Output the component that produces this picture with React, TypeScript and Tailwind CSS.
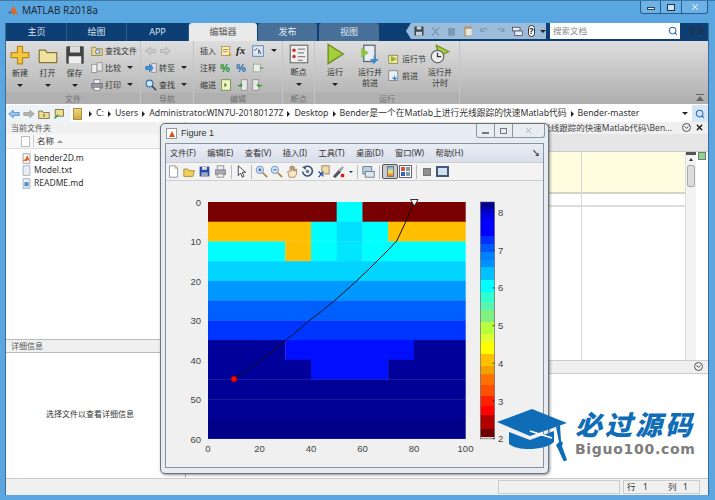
import type { ReactNode } from "react"
import { Search, X, ChevronDown } from "lucide-react"

const DARK = "#00009a"
const BLUE = "#0010ff"
const RED = "#780000"
const AMB = "#ffbf00"
const CY = "#00ffff"

// heatmap rows: [colour, columns] pairs, columns are 10 units wide
const rows: [string, number][][] = [
  [[RED, 5], [CY, 1], [RED, 4]],
  [[AMB, 4], [CY, 1], ["#00dfff", 1], [CY, 1], [AMB, 3]],
  [[CY, 3], [AMB, 1], [CY, 1], ["#00e6ff", 1], [CY, 4]],
  [["#00d4ff", 10]],
  [["#0098ff", 10]],
  [["#0060ff", 10]],
  [["#0034ff", 10]],
  [[DARK, 3], [BLUE, 5], [DARK, 2]],
  [[DARK, 4], [BLUE, 3], [DARK, 3]],
  [["#000094", 10]],
  [["#000094", 10]],
  [["#000088", 10]],
]

// colour bar bands, top to bottom: [colour, height]
const barBands: [string, number][] = [
  ["#000090", 6], ["#0000b8", 4], ["#0000e0", 7], ["#0000ff", 17], ["#0030ff", 8], ["#0058ff", 8], ["#0080ff", 8],
  ["#0090ff", 7], ["#00c0ff", 13], ["#00ffff", 12], ["#30ffd0", 10], ["#58f5b0", 8], ["#80f080", 12], ["#b8ff40", 12],
  ["#e0ff30", 8], ["#ffff00", 12], ["#ffc000", 12], ["#f0a000", 8], ["#ff7000", 11], ["#ff5000", 11], ["#ff2000", 10],
  ["#ff0000", 9], ["#b00000", 14], ["#700000", 7.8],
]

function Icon({ children, size = 14, view = 16 }: { children: ReactNode; size?: number; view?: number }) {
  return (
    <svg width={size} height={size} viewBox={`0 0 ${view} ${view}`} className="shrink-0">
      {children}
    </svg>
  )
}

function Caret({ className = "" }: { className?: string }) {
  return <span className={`inline-block w-0 h-0 border-x-[3px] border-x-transparent border-t-[3px] border-t-[#222] ${className}`} />
}

function BigBtn({ icon, lines, caret = true, width }: { icon: ReactNode; lines: string[]; caret?: boolean; width: string }) {
  return (
    <div className={`flex flex-col items-center ${width}`}>
      <div className="h-[25px] flex items-center justify-center">{icon}</div>
      <div className="text-center leading-[11px] text-[8px] text-[#333]">
        {lines.map((l) => (
          <div key={l}>{l}</div>
        ))}
      </div>
      {caret && <Caret className="mt-[6px]" />}
    </div>
  )
}

function SmallBtn({ icon, label, caret }: { icon: ReactNode; label: string; caret?: boolean }) {
  return (
    <div className="flex items-center h-[17px] gap-[2px]">
      {icon}
      <span className="text-[8px] text-[#333] whitespace-nowrap">{label}</span>
      {caret && <Caret className="ml-[4px]" />}
    </div>
  )
}

function Section({ label, width, children }: { label: string; width: string; children: ReactNode }) {
  return (
    <div className={`${width} shrink-0 flex flex-col border-r border-[#c4c4c4]`}>
      <div className="h-[52px] flex overflow-hidden">{children}</div>
      <div className="h-[11px] bg-[#b0b0b0] text-center text-[8px] leading-[11px] text-[#707070]">{label}</div>
    </div>
  )
}

function Slot({ children, width = "w-[15.5px]" }: { children: ReactNode; width?: string }) {
  return <div className={`${width} shrink-0 flex justify-center items-center`}>{children}</div>
}

function Sep({ width }: { width: string }) {
  return (
    <div className={`${width} shrink-0 flex justify-center`}>
      <span className="w-px h-[14px] bg-[#bbb]" />
    </div>
  )
}

const tabs = [
  { label: "主页", w: "w-[60px]" },
  { label: "绘图", w: "w-[60px]" },
  { label: "APP", w: "w-[62px]" },
]

function Heatmap() {
  return (
    <svg width="370" height="272" viewBox="0 0 370 272" className="block">
      {rows.map((r, ri) => {
        let col = 0
        return r.map(([c, n]) => {
          const x = 35 + col * 25.74
          col += n
          return <rect key={`${ri}-${col}`} x={x} y={18 + ri * 19.72} width={n * 25.74 + 0.3} height={20} fill={c} />
        })
      })}
      <path
        d="M241 19 Q233 38 223.7 57 C200 82 165 116 137 136 C115 155 88 177 61 195"
        fill="none"
        stroke="#111"
        strokeWidth="1"
      />
      <circle cx="61" cy="195" r="3" fill="#f00" stroke="#800" strokeWidth="0.7" />
      <path d="M237.5 15.5h7.5l-3.7 6.5z" fill="#fff" stroke="#333" strokeWidth="1" />
      {[0, 10, 20, 30, 40, 50, 60].map((v, i) => (
        <text key={v} x="28" y={22 + i * 39.45} textAnchor="end" fontSize="9.5" fill="#444" fontFamily="Liberation Sans">
          {v}
        </text>
      ))}
      {[0, 20, 40, 60, 80, 100].map((v, i) => (
        <text key={v} x={35 + i * 51.5} y="268" textAnchor="middle" fontSize="9.5" fill="#444" fontFamily="Liberation Sans">
          {v}
        </text>
      ))}
      {barBands.reduce<{ y: number; els: ReactNode[] }>(
        (acc, [c, h], i) => {
          acc.els.push(<rect key={i} x="307.5" y={acc.y} width="14" height={h + 0.3} fill={c} />)
          acc.y += h
          return acc
        },
        { y: 18, els: [] }
      ).els}
      <rect x="307.5" y="18" width="14" height="236.8" fill="none" stroke="#555" strokeWidth="0.6" />
      {[8, 7, 6, 5, 4, 3, 2].map((v, i) => (
        <g key={v}>
          <path d={`M319.5 ${28.5 + i * 37.7}h2`} stroke="#222" strokeWidth="0.8" />
          <text x="325" y={32 + i * 37.7} fontSize="9.5" fill="#444" fontFamily="Liberation Sans">
            {v}
          </text>
        </g>
      ))}
    </svg>
  )
}

function FigureWindow() {
  return (
    <div className="absolute left-[160px] top-[122px] w-[389px] h-[351px] rounded-[5px] border border-[#6b7478] bg-[#e6ecf1] shadow-[1px_1px_3px_rgba(0,0,0,0.45)] px-[4px] pb-[5px] flex flex-col">
      <div className="h-[19px] shrink-0 flex items-center gap-[4px] pl-[1px]">
        <div className="w-[11px] h-[11px] bg-white border border-[#999] flex items-center justify-center">
          <span className="block w-0 h-0 border-x-[3px] border-x-transparent border-b-[6px] border-b-[#d9551c]" />
        </div>
        <span className="text-[9px] text-[#333] font-['Liberation_Sans',sans-serif]">Figure 1</span>
        <div className="ml-auto -mt-[5px] -mr-[1px] flex h-[14px] rounded-b-[3px] border border-t-0 border-[#8a96a0] bg-[#e8edf1]">
          <div className="w-[18px] flex items-end justify-center pb-[3px] border-r border-[#8a96a0]">
            <span className="block w-[7px] h-[2px] border border-[#777]" />
          </div>
          <div className="w-[18px] flex items-center justify-center border-r border-[#8a96a0]">
            <span className="block w-[7px] h-[6px] border border-[#777]" />
          </div>
          <div className="w-[31px] flex items-center justify-center">
            <X size={9} strokeWidth={2} color="#999" />
          </div>
        </div>
      </div>
      <div className="flex-1 border border-[#87939e] bg-[#f0f0f0] flex flex-col min-h-0">
        <div className="h-[18px] shrink-0 bg-gradient-to-b from-[#e9edf5] to-[#d8deea] flex items-center pl-[4px] gap-[11.5px] text-[8.25px] text-[#333] relative">
          {["文件(F)", "编辑(E)", "查看(V)", "插入(I)", "工具(T)", "桌面(D)", "窗口(W)", "帮助(H)"].map((m) => (
            <span key={m} className="whitespace-nowrap">{m}</span>
          ))}
          <span className="absolute right-[3px] top-[3px] text-[8px] text-[#222] font-bold">↘</span>
        </div>
        <div className="h-[19px] shrink-0 border-y border-[#cfcfcf] bg-[#f3f3f3] flex items-center">
          <Slot><Icon size={13}><path d="M3 1h7l3 3v11H3z" fill="#fff" stroke="#7b8aa0" /><path d="M10 1v3h3z" fill="#f5dc80" stroke="#a08a3a" strokeWidth="0.6" /></Icon></Slot>
          <Slot><Icon size={13}><path d="M1 5h5l1 2h7l-2 7H1z" fill="#f0d060" stroke="#a08020" /></Icon></Slot>
          <Slot><Icon size={13}><rect x="2" y="2" width="12" height="12" fill="#2b4aa8" /><rect x="5" y="2" width="6" height="4" fill="#ddd" /><rect x="4" y="9" width="8" height="5" fill="#9ab" /></Icon></Slot>
          <Slot><Icon size={13}><rect x="4" y="1" width="8" height="6" fill="#eee" stroke="#888" /><rect x="2" y="6" width="12" height="6" fill="#aab" stroke="#778" /><rect x="4" y="11" width="8" height="4" fill="#eee" stroke="#888" /></Icon></Slot>
          <Sep width="w-[6px]" />
          <Slot><Icon size={13}><path d="M4 1v12l3-3 2 5 2-1-2-5h4z" fill="#fff" stroke="#222" /></Icon></Slot>
          <Sep width="w-[4px]" />
          <Slot><Icon size={13}><circle cx="6" cy="6" r="4.5" fill="#cfe6fa" stroke="#5a86b8" /><path d="M9.5 9.5L15 15" stroke="#b08030" strokeWidth="2" /><path d="M4 6h4M6 4v4" stroke="#337" /></Icon></Slot>
          <Slot><Icon size={13}><circle cx="6" cy="6" r="4.5" fill="#cfe6fa" stroke="#5a86b8" /><path d="M9.5 9.5L15 15" stroke="#b08030" strokeWidth="2" /><path d="M4 6h4" stroke="#337" /></Icon></Slot>
          <Slot><Icon size={13}><path d="M4 15L2 8l1-1 2 2V2h1l1 5V1h1l1 6V2h1l1 6 1-3h1v6l-2 4z" fill="#fde8c8" stroke="#8a6a40" strokeWidth="0.8" /></Icon></Slot>
          <Slot><Icon size={13}><path d="M4 3a6 6 0 1 1-2 5" fill="none" stroke="#335577" strokeWidth="2" /><path d="M1 2h5v4z" fill="#335577" /><circle cx="8" cy="8" r="2.2" fill="#778" /></Icon></Slot>
          <Slot><Icon size={13}><rect x="6" y="1" width="9" height="10" fill="#f3dca0" stroke="#876" /><path d="M2 15l6-7M2 8l6 6" stroke="#1738a8" strokeWidth="1.4" /></Icon></Slot>
          <Slot><Icon size={13}><path d="M1 14l7-8 3 3-7 7z" fill="#556" /><path d="M8 6l5-4 1 1-4 6" fill="#aaa" stroke="#666" strokeWidth="0.5" /><rect x="11" y="11" width="4" height="4" fill="#e11" /></Icon></Slot>
          <Slot width="w-[8px]"><span className="block w-0 h-0 border-x-[2px] border-x-transparent border-t-[2px] border-t-[#333]" /></Slot>
          <Sep width="w-[6px]" />
          <Slot><Icon size={13}><rect x="1" y="2" width="11" height="9" fill="#bcd0e4" stroke="#5a7288" /><rect x="4" y="8" width="11" height="7" fill="#dfe6ec" stroke="#5a7288" /></Icon></Slot>
          <Sep width="w-[6px]" />
          <Slot width="w-[16px]">
            <div className="w-[16px] h-[15px] rounded-[2px] border border-[#555] bg-[#c8ccd2] flex items-center justify-center">
              <div className="w-[7px] h-[11px] border border-[#777] bg-gradient-to-b from-[#6ab0f0] via-[#f8e060] to-[#e08030]" />
            </div>
          </Slot>
          <Slot>
            <div className="w-[13px] h-[13px] border border-[#667] bg-white grid grid-cols-2 gap-[1px] p-[1px]">
              <span className="bg-[#e05030]" /><span className="bg-[#8899aa]" /><span className="bg-[#3060c0]" /><span className="bg-[#8899aa]" />
            </div>
          </Slot>
          <Sep width="w-[5px]" />
          <Slot width="w-[16px]"><span className="w-[8px] h-[8px] bg-[#909090] border border-[#777]" /></Slot>
          <Slot><div className="w-[13px] h-[11px] border-2 border-[#445a74] bg-[#cfe0ef]" /></Slot>
        </div>
        <div className="flex-1 min-h-0 overflow-hidden">
          <div className="ml-[7px] mt-[3px]">
            <Heatmap />
          </div>
        </div>
      </div>
    </div>
  )
}

function Watermark() {
  return (
    <div className="absolute left-[497px] top-[408px] flex items-start">
      <svg width="72" height="52" viewBox="0 0 72 52">
        <path d="M0 13L35 0l35 14-37 13z" fill="#0f6cb6" />
        <path d="M12 23l21 8 24-9v11c-8 8-35 10-45 2z" fill="#0f6cb6" />
        <path d="M33 22l22 7" stroke="#fff" strokeWidth="1.5" />
        <path d="M59 18l4-2 1 16 2 2-1 3 5 14-3 2-6-13-2-4 3-3z" fill="#0f6cb6" />
      </svg>
      <div className="ml-[6px] flex flex-col">
        <span className="text-[27px] leading-[30px] italic font-black tracking-[3px] text-[#0f6cb6] font-['Noto_Sans_CJK_SC',sans-serif] whitespace-nowrap">必过源码</span>
        <span className="mt-[3px] text-[14px] leading-[14px] font-bold tracking-[0.7px] text-[#7d7d7d] font-['DejaVu_Sans',sans-serif] whitespace-nowrap">Biguo100.com</span>
      </div>
    </div>
  )
}

export default function App() {
  return (
    <div className="relative w-[715px] h-[500px] overflow-hidden bg-[#5aa6e0] border-t border-[#3d7aa8] font-['Noto_Sans','Noto_Sans_CJK_SC',sans-serif] flex flex-col pl-[5px] pr-[6px] pb-[5px]">
      {/* title bar */}
      <div className="h-[22px] shrink-0 flex items-start relative">
        <div className="flex items-center gap-[3px] pt-[2px] pl-[2px]">
          <svg width="12" height="12" viewBox="0 0 16 16"><path d="M1 10l4-2 4-7 6 13-3-3-3 3-3-5z" fill="#e0661c" /><path d="M1 10l4-2 2 2-3 2z" fill="#3a70a8" /></svg>
          <span className="text-[10px] text-[#1c2a38]">MATLAB R2018a</span>
        </div>
        <div className="ml-auto mr-[1px] flex h-[13px] rounded-b-[3px] border border-t-0 border-[#2a5c88] bg-[#6db2e6]">
          <div className="w-[20px] flex items-end justify-center pb-[3px] border-r border-[#2a5c88]"><span className="block w-[8px] h-[3px] bg-[#eef] border border-[#345]" /></div>
          <div className="w-[21px] flex items-center justify-center border-r border-[#2a5c88]"><span className="block w-[8px] h-[7px] border border-[#234] bg-[#cfe3f4]" /></div>
          <div className="w-[25px] flex items-center justify-center"><X size={10} strokeWidth={2.5} color="#e8f0f8" /></div>
        </div>
      </div>

      <div className="flex-1 min-h-0 flex flex-col border-l border-[#3d6d96] border-r bg-[#f0f0f0]">
        {/* tab strip */}
        <div className="h-[18px] shrink-0 bg-[#0d3e74] flex items-end relative text-[9px]">
          <div className="w-px" />
          {tabs.map((t) => (
            <div key={t.label} className={`${t.w} h-[18px] flex items-center justify-center text-[#d8e2ee] border-r border-[#2a5a8c]`}>{t.label}</div>
          ))}
          <div className="w-[68px] h-[18px] rounded-t-[3px] bg-[#e9e9e9] flex items-center justify-center text-[#555]">编辑器</div>
          <div className="w-[60px] h-[18px] ml-[1px] rounded-t-[3px] bg-[#476f98] flex items-center justify-center text-[#e0e8f2] border-r border-[#0d3e74]">发布</div>
          <div className="w-[60px] h-[18px] ml-[1px] rounded-t-[3px] bg-[#476f98] flex items-center justify-center text-[#e0e8f2]">视图</div>
          <div className="absolute left-[400px] top-[0px] w-[140px] h-[16px] bg-[#9cbcdb] [clip-path:polygon(5px_0,100%_0,100%_100%,5px_100%,0_50%)] flex items-center pl-[7px] gap-[5px]">
            <Icon size={12}><rect x="2" y="2" width="12" height="12" fill="#3b4752" /><rect x="5" y="2" width="6" height="4" fill="#c8d0d8" /><rect x="4" y="9" width="8" height="5" fill="#c8d0d8" /></Icon>
            <Icon size={11}><path d="M3 2l10 12M13 2L3 14" stroke="#7b97b4" strokeWidth="2" /></Icon>
            <Icon size={11}><rect x="3" y="3" width="10" height="11" fill="#7b97b4" /></Icon>
            <Icon size={12}><rect x="3" y="2" width="10" height="13" fill="#b09868" /><rect x="5" y="5" width="8" height="9" fill="#e6e6e0" /></Icon>
            <Icon size={11}><path d="M3 8a5 5 0 0 1 9-2M3 3v5h5" fill="none" stroke="#7b97b4" strokeWidth="1.6" /></Icon>
            <Icon size={11}><path d="M13 8a5 5 0 0 0-9-2M13 3v5H8" fill="none" stroke="#7b97b4" strokeWidth="1.6" /></Icon>
            <Icon size={12}><rect x="2" y="3" width="10" height="5" fill="#e8eef4" stroke="#445" /><rect x="5" y="8" width="10" height="6" fill="#e8eef4" stroke="#445" /></Icon>
            <div className="w-[12px] h-[12px] rounded-full bg-white border border-[#333] text-[9px] leading-[10px] text-center font-bold text-[#222]">?</div>
            <Caret />
          </div>
          <div className="absolute left-[544px] top-0 w-[130px] h-[16px] bg-white flex items-center pl-[3px] pr-[2px] text-[8.5px] text-[#888]">
            搜索文档
            <Search size={10} strokeWidth={2.5} color="#2a6cb0" className="ml-auto" />
          </div>
          <span className="absolute left-[683px] top-[2px] text-[8px] text-[#26303c]">登录</span>
        </div>

        {/* ribbon */}
        <div className="h-[63px] shrink-0 bg-gradient-to-b from-[#dedede] to-[#aeaeae] flex">
          <Section label="文件" width="w-[135px]">
            <div className="flex pt-[1px]">
              <BigBtn width="w-[28px]" lines={["新建"]} icon={<Icon size={20}><path d="M6 1h4v5h5v4h-5v5H6v-5H1V6h5z" fill="#f6c93a" stroke="#b88a1e" /></Icon>} />
              <BigBtn width="w-[27px]" lines={["打开"]} icon={<Icon size={20}><path d="M1 4h5l1 2h8v8H1z" fill="#efe2a0" stroke="#8a7a3a" /></Icon>} />
              <BigBtn width="w-[27px]" lines={["保存"]} icon={<Icon size={20}><rect x="1" y="1" width="14" height="14" rx="1" fill="#444" /><rect x="4" y="1" width="8" height="5" fill="#ddd" /><rect x="3" y="9" width="10" height="6" fill="#eee" /></Icon>} />
            </div>
            <div className="flex flex-col ml-[3px] pt-[1px]">
              <SmallBtn label="查找文件" icon={<Icon size={12}><path d="M1 3h5l1 2h8v9H1z" fill="#ecd98e" stroke="#8a7a3a" /><circle cx="9" cy="9" r="3" fill="#cde" stroke="#36a" /></Icon>} />
              <SmallBtn label="比较" caret icon={<Icon size={12}><rect x="1" y="3" width="7" height="11" fill="#eee" stroke="#888" /><rect x="8" y="1" width="7" height="11" fill="#e4e4e4" stroke="#888" /></Icon>} />
              <SmallBtn label="打印" caret icon={<Icon size={12}><rect x="4" y="1" width="8" height="5" fill="#eee" stroke="#777" /><rect x="1" y="6" width="14" height="6" fill="#99a" stroke="#667" /><rect x="4" y="11" width="8" height="4" fill="#fff" stroke="#777" /></Icon>} />
            </div>
          </Section>
          <Section label="导航" width="w-[53px]">
            <div className="flex flex-col pl-[4px] pt-[1px]">
              <div className="flex h-[17px] items-center gap-[2px]">
                <Icon size={12}><path d="M1 8l6-5v3h7v4H7v3z" fill="#ccc" stroke="#aaa" /></Icon>
                <Icon size={12}><path d="M15 8L9 3v3H2v4h7v3z" fill="#ccc" stroke="#aaa" /></Icon>
              </div>
              <SmallBtn label="转至" caret icon={<Icon size={12}><rect x="9" y="2" width="6" height="12" fill="#dde" stroke="#889" /><path d="M1 8l0-2h5V3l5 5-5 5v-3H1z" fill="#3f8fd8" stroke="#27a" /></Icon>} />
              <SmallBtn label="查找" caret icon={<Icon size={12}><circle cx="6" cy="6" r="4.5" fill="#cfe6fa" stroke="#3a6ea8" strokeWidth="1.5" /><path d="M9.5 9.5L15 15" stroke="#345" strokeWidth="2" /></Icon>} />
            </div>
          </Section>
          <Section label="编辑" width="w-[89px]">
            <div className="pl-[6px] pt-[1px] grid grid-cols-[20px_16px_16px_19px_10px] auto-rows-[17px] items-center text-[8px] text-[#333]">
              <span>插入</span>
              <Icon size={12}><rect x="2" y="2" width="11" height="12" fill="#f7eebb" stroke="#a08a3a" /><path d="M4 6h7M4 9h6" stroke="#a06a20" /><circle cx="13" cy="13" r="2" fill="#e0a020" /></Icon>
              <span className="text-[11px] italic font-bold font-['Liberation_Serif',serif] text-[#222] leading-none">fx</span>
              <Icon size={12}><rect x="1" y="1" width="14" height="14" fill="#dfe8f2" stroke="#3a6ea8" /><path d="M3 8l4-4M9 12V6l3 6" stroke="#234" fill="none" /></Icon>
              <Caret />
              <span>注释</span>
              <span className="text-[11px] font-bold text-[#2c9a3c] leading-none">%</span>
              <span className="text-[11px] font-bold text-[#3a78b8] leading-none">%</span>
              <Icon size={12}><rect x="2" y="3" width="9" height="10" fill="#eee" stroke="#5a9a5a" strokeDasharray="2 1" /><path d="M11 8h4" stroke="#444" /></Icon>
              <span />
              <span>缩进</span>
              <Icon size={12}><rect x="2" y="1" width="12" height="14" fill="#eef3c0" stroke="#5a8a3a" /><path d="M6 5l3 3-3 3z" fill="#2a7a2a" /></Icon>
              <Icon size={12}><rect x="7" y="1" width="8" height="14" fill="#e8e8e8" stroke="#888" /><path d="M1 8h5V5l3 3-3 3z" fill="#3a9a3a" /></Icon>
              <Icon size={12}><rect x="1" y="1" width="8" height="14" fill="#e8e8e8" stroke="#888" /><path d="M15 8H9V5L6 8l3 3z" fill="#3a9a3a" /></Icon>
              <span />
            </div>
          </Section>
          <Section label="断点" width="w-[32px]">
            <BigBtn width="w-full" lines={["断点"]} icon={<Icon size={20}><rect x="1" y="1" width="14" height="14" fill="#eee" stroke="#777" /><circle cx="4" cy="5" r="1.4" fill="#c33" /><circle cx="4" cy="10" r="1.4" fill="#c33" /><path d="M7 4h6M7 7h5M7 10h6M7 13h4" stroke="#888" /></Icon>} />
          </Section>
          <Section label="运行" width="w-[145px]">
            <div className="flex">
              <BigBtn width="w-[40px]" lines={["运行"]} icon={<Icon size={22}><path d="M3 1l11 7-11 7z" fill="#a6cf3c" stroke="#6f8f22" /></Icon>} />
              <BigBtn width="w-[30px]" caret={false} lines={["运行并", "前进"]} icon={<Icon size={20}><rect x="3" y="1" width="9" height="13" fill="#e7edf2" stroke="#567" /><path d="M1 3l6 4-6 4z" fill="#8cc43c" /><path d="M12 9v3h3l-4 4-3-4h3V9z" fill="#3a86d8" /></Icon>} />
              <div className="flex flex-col ml-[3px] pt-[9px] w-[39px]">
                <SmallBtn label="运行节" icon={<Icon size={12}><rect x="1" y="3" width="12" height="11" fill="#f2e6a0" stroke="#8a7a3a" /><path d="M4 4l8 4-8 4z" fill="#88b83a" /></Icon>} />
                <SmallBtn label="前进" icon={<Icon size={12}><rect x="1" y="1" width="12" height="13" fill="#eee" stroke="#778" /><path d="M9 7v3h4l-4 4-4-4h3V7z" fill="#3a86d8" /></Icon>} />
              </div>
              <BigBtn width="w-[26px]" caret={false} lines={["运行并", "计时"]} icon={<Icon size={20}><path d="M5 1l10 5-8 4z" fill="#a6cf3c" stroke="#6f8f22" /><circle cx="6" cy="10" r="5" fill="#eee" stroke="#666" /><path d="M6 7v3h3" stroke="#333" fill="none" /></Icon>} />
            </div>
          </Section>
          <div className="flex-1 relative">
            <span className="absolute right-[4px] bottom-[3px] w-0 h-0 border-x-[4px] border-x-transparent border-b-[5px] border-b-[#666]" />
            <span className="absolute right-[4px] bottom-[9px] w-[8px] h-px bg-[#666]" />
          </div>
        </div>

        {/* address bar */}
        <div className="h-[18px] shrink-0 flex items-center bg-[#eef3f8] border-t border-[#fff]">
          <div className="w-[65px] shrink-0 flex items-center pl-[2px] gap-[3px]">
            <Icon size={12}><path d="M1 8l6-5v3h8v4H7v3z" fill="#9cc6ec" stroke="#4a86c0" /></Icon>
            <Icon size={12}><path d="M15 8L9 3v3H1v4h8v3z" fill="#b5b5b5" stroke="#999" /></Icon>
            <Icon size={12}><path d="M1 4h5l1 2h8v8H1z" fill="#efdc90" stroke="#665a2a" /><path d="M8 8v4" stroke="#222" /></Icon>
            <Icon size={12}><path d="M3 2h11v9H3z" fill="#efdc90" stroke="#665a2a" /><path d="M2 14l5-5" stroke="#2a9a3a" strokeWidth="2" /></Icon>
          </div>
          <div className="flex-1 h-full bg-white flex items-center text-[8.75px] text-[#333] whitespace-nowrap overflow-hidden pl-[2px]">
            <div className="w-[9px] h-[12px] bg-gradient-to-b from-[#f0d878] to-[#d0a840] border border-[#a89040] mr-[3px] shrink-0" />
            {["C:", "Users", "Administrator.WIN7U-20180127Z", "Desktop", "Bender是一个在Matlab上进行光线跟踪的快速Matlab代码", "Bender-master"].map((s) => (
              <span key={s} className="flex items-center">
                <span className="w-0 h-0 mx-[4px] border-y-[3px] border-y-transparent border-l-[3px] border-l-[#222]" />
                {s}
              </span>
            ))}
            <Caret className="ml-auto mr-[4px]" />
          </div>
          <div className="w-[16px] h-full shrink-0 bg-[#d6e6f6] flex items-center justify-center">
            <Search size={10} strokeWidth={2.5} color="#2a6cb0" />
          </div>
        </div>

        {/* panels */}
        <div className="flex-1 min-h-0 flex">
          <div className="w-[180px] shrink-0 flex flex-col bg-white border-r border-[#bbb]">
            <div className="h-[12px] shrink-0 bg-[#f0f0f0] text-[8px] leading-[12px] pl-[5px] text-[#555]">当前文件夹</div>
            <div className="h-[15px] shrink-0 bg-[#f7f7f7] border-b border-[#ddd] flex items-center pl-[15px] text-[8.5px] text-[#333]">
              <span className="w-[9px] h-[11px] border border-[#bbb] bg-white mr-[3px]" />
              <span className="w-px h-[12px] bg-[#ccc] mr-[3px]" />
              名称
              <span className="ml-[3px] w-0 h-0 border-x-[3px] border-x-transparent border-b-[3px] border-b-[#999]" />
            </div>
            <div className="flex flex-col pl-[15px] pt-[3px] text-[8.5px] text-[#333]">
              <div className="flex items-center gap-[2px] h-[12.5px]"><Icon size={11}><path d="M3 1h10v14H3z" fill="#fff" stroke="#778" /><path d="M2 11l4-2 3-6 4 9-3-2-2 2z" fill="#e0661c" /></Icon>bender2D.m</div>
              <div className="flex items-center gap-[2px] h-[12.5px]"><Icon size={11}><path d="M3 1h10v14H3z" fill="#e8eef6" stroke="#8898b0" /></Icon>Model.txt</div>
              <div className="flex items-center gap-[2px] h-[12.5px]"><Icon size={11}><path d="M3 1h10v14H3z" fill="#e8eef6" stroke="#8898b0" /><rect x="5" y="6" width="6" height="6" fill="#5a90c8" /></Icon>README.md</div>
            </div>
            <div className="flex-1" />
            <div className="h-[14px] shrink-0 bg-[#f0f0f0] border-y border-[#bbb] text-[8px] leading-[12px] pl-[5px] text-[#555]">详细信息</div>
            <div className="h-[125px] shrink-0 flex items-center justify-start pl-[40px] text-[8px] text-[#333] pb-[3px]">选择文件以查看详细信息</div>
          </div>

          <div className="flex-1 flex flex-col bg-white min-w-0">
            <div className="h-[12px] shrink-0 bg-[#f0f0f0] relative overflow-hidden">
              <span className="absolute right-[17px] top-[1px] w-[9px] h-[9px] rounded-full border border-[#555] flex items-center justify-center"><ChevronDown size={7} color="#333" strokeWidth={3} /></span>
              <span className="absolute right-[4px] top-[1px]"><X size={9} color="#111" strokeWidth={3.5} /></span>
              <span className="absolute right-[36px] top-0 text-[8.5px] leading-[12px] text-[#444] whitespace-nowrap">光线跟踪的快速Matlab代码\Ben...</span>
            </div>
            <div className="h-[18px] shrink-0 bg-[#e6e6e6] border-b border-[#ccc]" />
            <div className="flex-1 flex min-h-0">
              <div className="flex-1 flex flex-col relative">
                <div className="h-[42px] shrink-0 bg-[#fffde0] border-b-2 border-[#d4d4c4]" />
                <div className="h-[13px] shrink-0 bg-white border-b-2 border-[#ddd]" />
                <span className="absolute right-[103px] top-0 bottom-0 w-px bg-[#d8d8d8]" />
                <div className="flex-1" />
              </div>
              <div className="w-[11px] shrink-0 bg-[#f3f3f3] border-l border-[#ddd] flex flex-col items-center">
                <span className="w-full h-[3px] bg-[#555]" />
                <span className="mt-[3px] w-0 h-0 border-x-[2px] border-x-transparent border-b-[3px] border-b-[#333]" />
                <span className="mt-[4px] w-[8px] h-[22px] rounded-[2px] bg-[#dcdcdc] border border-[#aaa]" />
              </div>
              <div className="w-[12px] shrink-0 bg-white pl-[2px]">
                <span className="block w-[8px] h-[8px] bg-[#8bd88b] border border-[#777]" />
              </div>
            </div>
            <div className="h-[14px] shrink-0 bg-[#efefef] border-y border-[#ccc] relative">
              <span className="absolute right-[5px] top-[1px] w-[9px] h-[9px] rounded-full border border-[#555] flex items-center justify-center"><ChevronDown size={7} color="#333" strokeWidth={3} /></span>
            </div>
            <div className="h-[104px] shrink-0 bg-white" />
          </div>
        </div>

        {/* status bar */}
        <div className="h-[17px] shrink-0 bg-[#f0f0f0] border-t border-[#c8c8c8] flex items-center text-[8.5px] text-[#333]">
          <div className="w-[492px] shrink-0" />
          <div className="w-[122px] h-[14px] border border-[#ccc]" />
          <div className="w-[77px] h-[14px] ml-[3px] border border-[#ccc] flex items-center pl-[3px] whitespace-nowrap">
            <span className="w-[16px]">行</span>
            <span className="w-[25px]">1</span>
            <span className="w-[15px]">列</span>
            <span>1</span>
          </div>
        </div>
      </div>

      <FigureWindow />
      <Watermark />
    </div>
  )
}
